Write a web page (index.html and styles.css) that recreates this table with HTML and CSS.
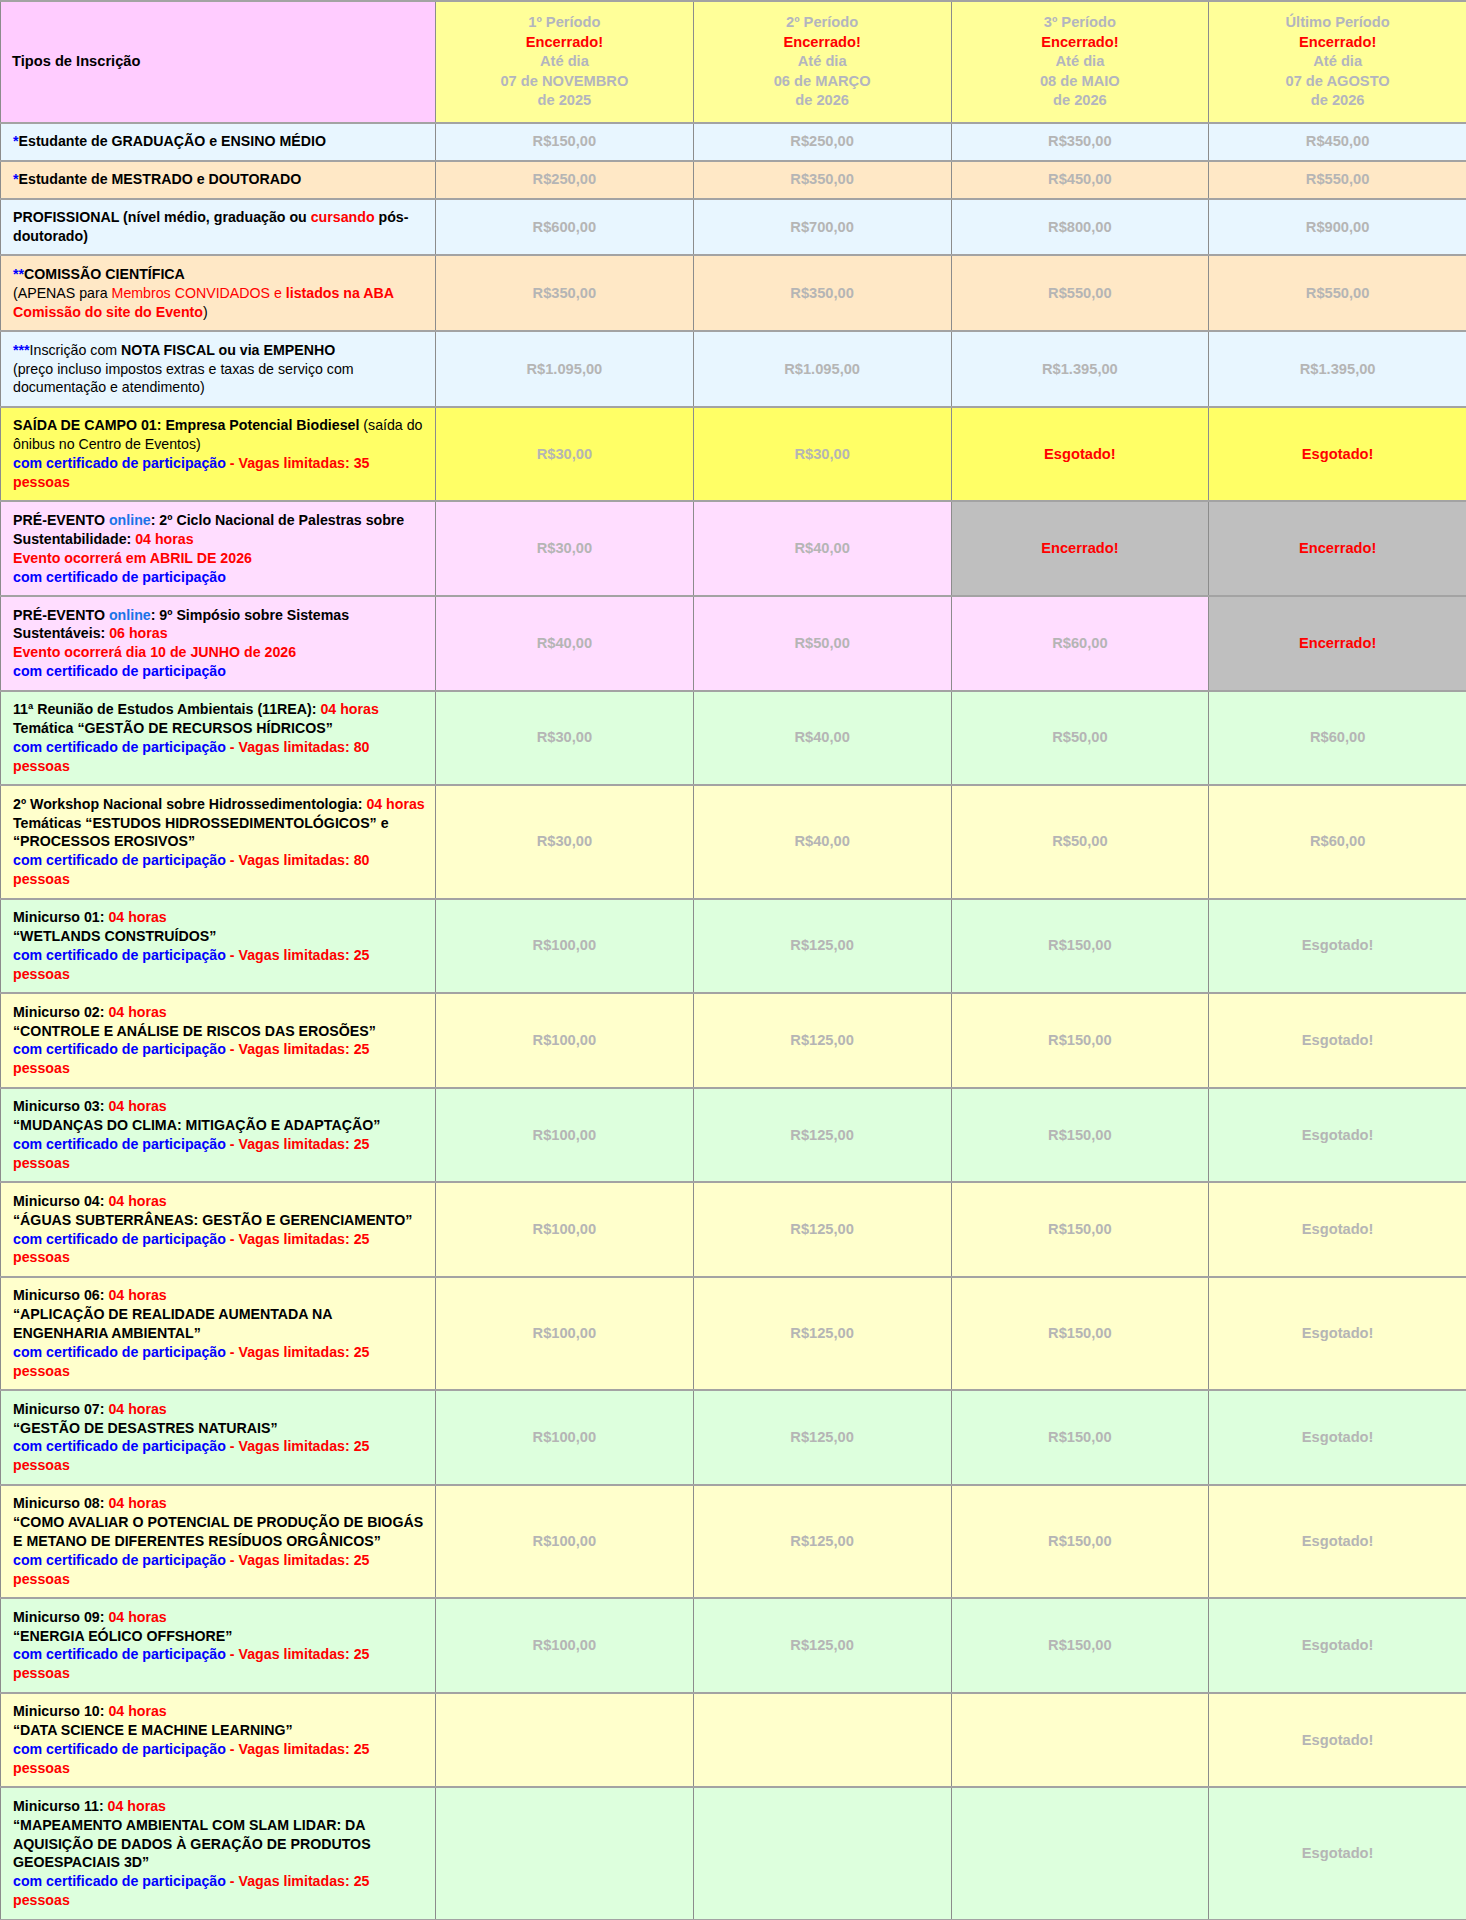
FILE: index.html
```html
<!DOCTYPE html>
<html lang="pt-BR">
<head>
<meta charset="utf-8">
<title>Tipos de Inscrição</title>
<link rel="stylesheet" href="styles.css">
</head>
<body>
<table class="prices">
  <colgroup>
    <col class="c-type"><col class="c-p"><col class="c-p"><col class="c-p"><col class="c-p">
  </colgroup>
  <thead>
    <tr>
      <th class="h-type">Tipos de Inscrição</th>
      <th class="h-per">1º Período<br><span class="red">Encerrado!</span><br>Até dia<br>07 de NOVEMBRO<br>de 2025</th>
      <th class="h-per">2º Período<br><span class="red">Encerrado!</span><br>Até dia<br>06 de MARÇO<br>de 2026</th>
      <th class="h-per">3º Período<br><span class="red">Encerrado!</span><br>Até dia<br>08 de MAIO<br>de 2026</th>
      <th class="h-per">Último Período<br><span class="red">Encerrado!</span><br>Até dia<br>07 de AGOSTO<br>de 2026</th>
    </tr>
  </thead>
  <tbody>
    <tr class="bg-blue">
      <td class="type"><span class="blue">*</span>Estudante de GRADUAÇÃO e ENSINO MÉDIO</td>
      <td class="price">R$150,00</td><td class="price">R$250,00</td><td class="price">R$350,00</td><td class="price">R$450,00</td>
    </tr>
    <tr class="bg-orange">
      <td class="type"><span class="blue">*</span>Estudante de MESTRADO e DOUTORADO</td>
      <td class="price">R$250,00</td><td class="price">R$350,00</td><td class="price">R$450,00</td><td class="price">R$550,00</td>
    </tr>
    <tr class="bg-blue">
      <td class="type">PROFISSIONAL (nível médio, graduação ou <span class="red">cursando</span> pós-doutorado)</td>
      <td class="price">R$600,00</td><td class="price">R$700,00</td><td class="price">R$800,00</td><td class="price">R$900,00</td>
    </tr>
    <tr class="bg-orange">
      <td class="type"><span class="blue">**</span>COMISSÃO CIENTÍFICA<br><span class="reg">(APENAS para </span><span class="reg red">Membros CONVIDADOS e </span><span class="red">listados na ABA Comissão do site do Evento</span><span class="reg">)</span></td>
      <td class="price">R$350,00</td><td class="price">R$350,00</td><td class="price">R$550,00</td><td class="price">R$550,00</td>
    </tr>
    <tr class="bg-blue">
      <td class="type"><span class="blue">***</span><span class="reg">Inscrição com </span>NOTA FISCAL ou via EMPENHO<br><span class="reg">(preço incluso impostos extras e taxas de serviço com documentação e atendimento)</span></td>
      <td class="price">R$1.095,00</td><td class="price">R$1.095,00</td><td class="price">R$1.395,00</td><td class="price">R$1.395,00</td>
    </tr>
    <tr class="bg-yellow">
      <td class="type">SAÍDA DE CAMPO 01: Empresa Potencial Biodiesel<span class="reg"> (saída do ônibus no Centro de Eventos)</span><br><span class="blue">com certificado de participação</span><span class="red"> - Vagas limitadas: 35 pessoas</span></td>
      <td class="price">R$30,00</td><td class="price">R$30,00</td><td class="price alert">Esgotado!</td><td class="price alert">Esgotado!</td>
    </tr>
    <tr class="bg-pink">
      <td class="type">PRÉ-EVENTO <span class="online">online</span>: 2º Ciclo Nacional de Palestras sobre Sustentabilidade: <span class="red">04 horas</span><br><span class="red">Evento ocorrerá em ABRIL DE 2026</span><br><span class="blue">com certificado de participação</span></td>
      <td class="price">R$30,00</td><td class="price">R$40,00</td><td class="price alert closed">Encerrado!</td><td class="price alert closed">Encerrado!</td>
    </tr>
    <tr class="bg-pink">
      <td class="type">PRÉ-EVENTO <span class="online">online</span>: 9º Simpósio sobre Sistemas Sustentáveis: <span class="red">06 horas</span><br><span class="red">Evento ocorrerá dia 10 de JUNHO de 2026</span><br><span class="blue">com certificado de participação</span></td>
      <td class="price">R$40,00</td><td class="price">R$50,00</td><td class="price">R$60,00</td><td class="price alert closed">Encerrado!</td>
    </tr>
    <tr class="bg-green">
      <td class="type">11ª Reunião de Estudos Ambientais (11REA): <span class="red">04 horas</span><br>Temática “GESTÃO DE RECURSOS HÍDRICOS”<br><span class="blue">com certificado de participação</span><span class="red"> - Vagas limitadas: 80 pessoas</span></td>
      <td class="price">R$30,00</td><td class="price">R$40,00</td><td class="price">R$50,00</td><td class="price">R$60,00</td>
    </tr>
    <tr class="bg-lyellow">
      <td class="type">2º Workshop Nacional sobre Hidrossedimentologia: <span class="red">04 horas</span><br>Temáticas “ESTUDOS HIDROSSEDIMENTOLÓGICOS” e “PROCESSOS EROSIVOS”<br><span class="blue">com certificado de participação</span><span class="red"> - Vagas limitadas: 80 pessoas</span></td>
      <td class="price">R$30,00</td><td class="price">R$40,00</td><td class="price">R$50,00</td><td class="price">R$60,00</td>
    </tr>
    <tr class="bg-green">
      <td class="type">Minicurso 01: <span class="red">04 horas</span><br>“WETLANDS CONSTRUÍDOS”<br><span class="blue">com certificado de participação</span><span class="red"> - Vagas limitadas: 25 pessoas</span></td>
      <td class="price">R$100,00</td><td class="price">R$125,00</td><td class="price">R$150,00</td><td class="price">Esgotado!</td>
    </tr>
    <tr class="bg-lyellow">
      <td class="type">Minicurso 02: <span class="red">04 horas</span><br>“CONTROLE E ANÁLISE DE RISCOS DAS EROSÕES”<br><span class="blue">com certificado de participação</span><span class="red"> - Vagas limitadas: 25 pessoas</span></td>
      <td class="price">R$100,00</td><td class="price">R$125,00</td><td class="price">R$150,00</td><td class="price">Esgotado!</td>
    </tr>
    <tr class="bg-green">
      <td class="type">Minicurso 03: <span class="red">04 horas</span><br>“MUDANÇAS DO CLIMA: MITIGAÇÃO E ADAPTAÇÃO”<br><span class="blue">com certificado de participação</span><span class="red"> - Vagas limitadas: 25 pessoas</span></td>
      <td class="price">R$100,00</td><td class="price">R$125,00</td><td class="price">R$150,00</td><td class="price">Esgotado!</td>
    </tr>
    <tr class="bg-lyellow">
      <td class="type">Minicurso 04: <span class="red">04 horas</span><br>“ÁGUAS SUBTERRÂNEAS: GESTÃO E GERENCIAMENTO”<br><span class="blue">com certificado de participação</span><span class="red"> - Vagas limitadas: 25 pessoas</span></td>
      <td class="price">R$100,00</td><td class="price">R$125,00</td><td class="price">R$150,00</td><td class="price">Esgotado!</td>
    </tr>
    <tr class="bg-lyellow">
      <td class="type">Minicurso 06: <span class="red">04 horas</span><br>“APLICAÇÃO DE REALIDADE AUMENTADA NA ENGENHARIA AMBIENTAL”<br><span class="blue">com certificado de participação</span><span class="red"> - Vagas limitadas: 25 pessoas</span></td>
      <td class="price">R$100,00</td><td class="price">R$125,00</td><td class="price">R$150,00</td><td class="price">Esgotado!</td>
    </tr>
    <tr class="bg-green">
      <td class="type">Minicurso 07: <span class="red">04 horas</span><br>“GESTÃO DE DESASTRES NATURAIS”<br><span class="blue">com certificado de participação</span><span class="red"> - Vagas limitadas: 25 pessoas</span></td>
      <td class="price">R$100,00</td><td class="price">R$125,00</td><td class="price">R$150,00</td><td class="price">Esgotado!</td>
    </tr>
    <tr class="bg-lyellow">
      <td class="type">Minicurso 08: <span class="red">04 horas</span><br>“COMO AVALIAR O POTENCIAL DE PRODUÇÃO DE BIOGÁS E METANO DE DIFERENTES RESÍDUOS ORGÂNICOS”<br><span class="blue">com certificado de participação</span><span class="red"> - Vagas limitadas: 25 pessoas</span></td>
      <td class="price">R$100,00</td><td class="price">R$125,00</td><td class="price">R$150,00</td><td class="price">Esgotado!</td>
    </tr>
    <tr class="bg-green">
      <td class="type">Minicurso 09: <span class="red">04 horas</span><br>“ENERGIA EÓLICO OFFSHORE”<br><span class="blue">com certificado de participação</span><span class="red"> - Vagas limitadas: 25 pessoas</span></td>
      <td class="price">R$100,00</td><td class="price">R$125,00</td><td class="price">R$150,00</td><td class="price">Esgotado!</td>
    </tr>
    <tr class="bg-lyellow">
      <td class="type">Minicurso 10: <span class="red">04 horas</span><br>“DATA SCIENCE E MACHINE LEARNING”<br><span class="blue">com certificado de participação</span><span class="red"> - Vagas limitadas: 25 pessoas</span></td>
      <td class="price"></td><td class="price"></td><td class="price"></td><td class="price">Esgotado!</td>
    </tr>
    <tr class="bg-green">
      <td class="type">Minicurso 11: <span class="red">04 horas</span><br>“MAPEAMENTO AMBIENTAL COM SLAM LIDAR: DA AQUISIÇÃO DE DADOS À GERAÇÃO DE PRODUTOS GEOESPACIAIS 3D”<br><span class="blue">com certificado de participação</span><span class="red"> - Vagas limitadas: 25 pessoas</span></td>
      <td class="price"></td><td class="price"></td><td class="price"></td><td class="price">Esgotado!</td>
    </tr>
  </tbody>
</table>
</body>
</html>
```

FILE: styles.css
```css
html, body {
  margin: 0;
  padding: 0;
  background: #ffffff;
}

body {
  font-family: "Liberation Sans", Arial, sans-serif;
  font-size: 14.67px;
  font-weight: bold;
  color: #000000;
}

.prices {
  width: 1466px;
  border-collapse: collapse;
  table-layout: fixed;
}

.c-type { width: 435px; }
.c-p { width: 257.75px; }

.prices th,
.prices td {
  border-left: 1px solid #8c8c8c;
  border-right: 1px solid #8c8c8c;
  border-top: 2px solid #a3a3a3;
  border-bottom: 2px solid #a3a3a3;
}

.prices th {
  background: #ffff99;
  color: #b3b5bf;
  text-align: center;
  vertical-align: middle;
  padding: 11px 6px 11px;
  line-height: 19.5px;
  font-weight: bold;
}

.prices th.h-type {
  background: #ffccff;
  color: #000000;
  text-align: left;
  padding-left: 11px;
}

.prices td {
  vertical-align: middle;
  line-height: 18.85px;
  padding: 8.6px 8px 8.6px 12px;
}

.prices td.type {
  text-align: left;
  font-size: 14.2px;
}

.prices td.price {
  text-align: center;
  color: #b5b5b5;
  padding-left: 6px;
  padding-right: 6px;
}

.prices td.alert {
  color: #ff0000;
}

.reg { font-weight: normal; }
.red { color: #ff0000; }
.blue { color: #0000ff; }
.online { color: #1a73e8; }

.bg-blue td { background: #e8f6ff; }
.bg-orange td { background: #ffe8c6; }
.bg-yellow td { background: #ffff66; }
.bg-pink td { background: #ffddff; }
.bg-green td { background: #ddffdd; }
.bg-lyellow td { background: #ffffcc; }
.prices td.closed { background: #bfbfbf; }
```
